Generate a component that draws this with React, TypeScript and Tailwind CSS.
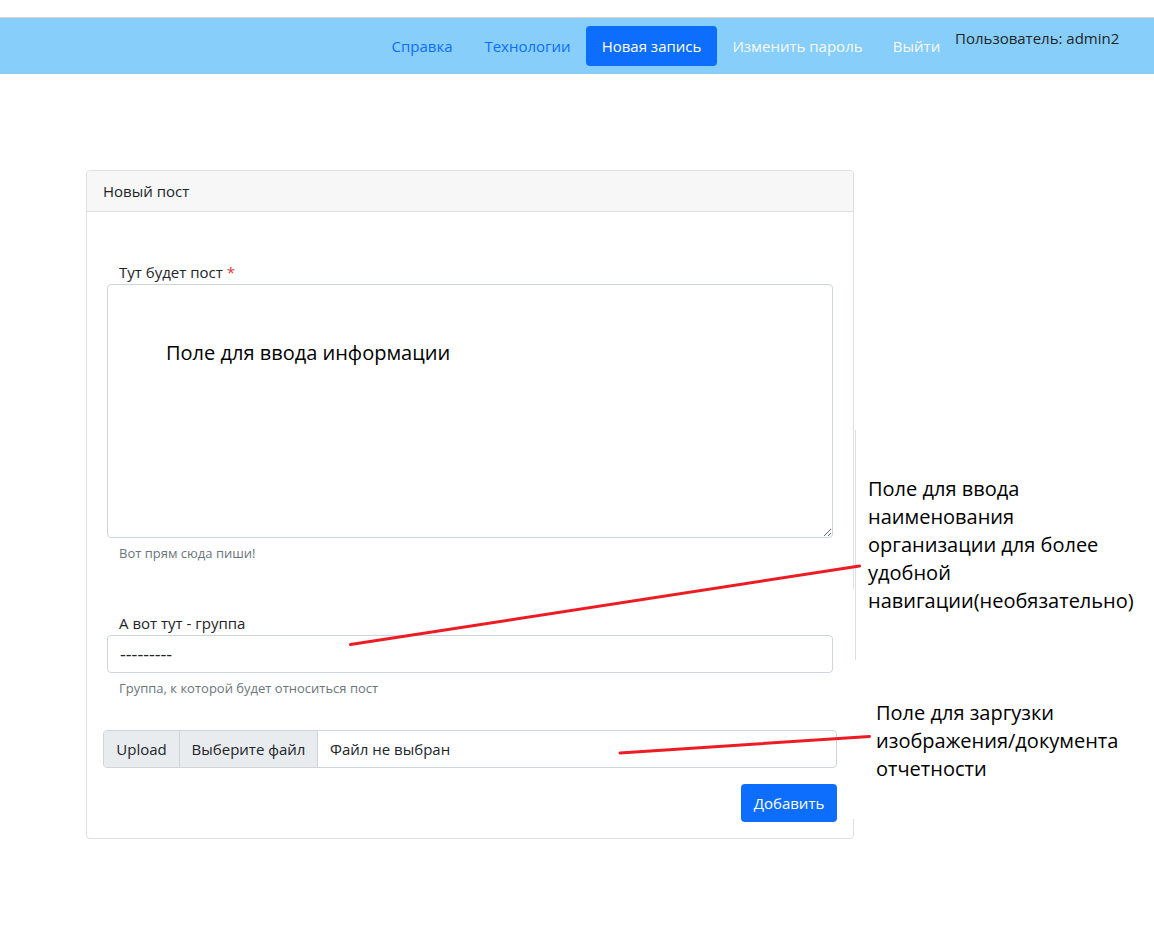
import { useState } from "react";

const navItems = [
  { label: "Справка", className: "w-[94px] text-[#0d6efd]" },
  { label: "Технологии", className: "w-[117px] text-[#0d6efd]" },
  { label: "Новая запись", className: "w-[131px] rounded bg-[#0d6efd] text-white" },
  { label: "Изменить пароль", className: "w-[161px] text-[#f8f9fa]" },
  { label: "Выйти", className: "w-[77px] text-[#f8f9fa]" },
];

function Header() {
  return (
    <header className="mt-[17px] flex justify-end border-t border-[#d3d3d3] bg-[#87cefa] py-2 pr-[36px]">
      <nav className="flex">
        {navItems.map((item) => (
          <a
            key={item.label}
            href="#"
            className={`flex h-10 items-center justify-center whitespace-nowrap ${item.className}`}
          >
            {item.label}
          </a>
        ))}
      </nav>
      <span className="w-[163px] whitespace-nowrap">Пользователь: admin2</span>
    </header>
  );
}

function PostForm() {
  const [fileName, setFileName] = useState("Файл не выбран");
  return (
    <form className="flex flex-col p-4" onSubmit={(e) => e.preventDefault()}>
      <div className="flex flex-col px-1 pt-8">
        <label htmlFor="post-text" className="px-3">
          Тут будет пост <span className="text-[#dc3545]">*</span>
        </label>
        <textarea
          id="post-text"
          required
          className="block h-[254px] w-full resize rounded border border-[#ced4da] bg-white px-3 py-2"
        />
        <small className="mt-1 px-3 text-[13px] leading-[22px] text-[#6c757d]">Вот прям сюда пиши!</small>
      </div>
      <div className="mt-[47px] flex flex-col px-1">
        <label htmlFor="post-group" className="px-3">
          А вот тут - группа
        </label>
        <select
          id="post-group"
          className="h-[38px] w-full appearance-none rounded border border-[#ced4da] bg-white px-3 text-[18px]"
        >
          <option>---------</option>
        </select>
        <small className="mt-1 px-3 text-[13px] leading-[22px] text-[#6c757d]">
          Группа, к которой будет относиться пост
        </small>
      </div>
      <label
        htmlFor="post-file"
        className="mt-[31px] flex h-[38px] overflow-hidden rounded border border-[#ced4da] bg-white"
      >
        <span className="flex w-[76px] items-center justify-center border-r border-[#ced4da] bg-[#e9ecef]">
          Upload
        </span>
        <span className="flex w-[138px] items-center justify-center border-r border-[#ced4da] bg-[#e9ecef]">
          Выберите файл
        </span>
        <span className="flex items-center px-3">{fileName}</span>
        <input
          id="post-file"
          type="file"
          className="sr-only"
          onChange={(e) => setFileName(e.target.files?.[0]?.name ?? "Файл не выбран")}
        />
      </label>
      <button type="submit" className="mt-4 h-[38px] w-24 self-end rounded bg-[#0d6efd] text-white">
        Добавить
      </button>
    </form>
  );
}

function Callouts() {
  return (
    <>
      <p className="pointer-events-none absolute top-[168px] left-[79px] text-[20px] leading-[28px] text-black">
        Поле для ввода информации
      </p>
      <span className="absolute top-[418px] -right-px h-[230px] w-px bg-white" />
      <span className="absolute top-[259px] -right-[3px] h-[230px] w-px bg-[#dfdfdf]" />
      <svg
        className="pointer-events-none absolute top-[379px] -right-[21px]"
        width="534"
        height="220"
        viewBox="340 550 534 220"
        fill="none"
        stroke="#ed1c24"
        strokeWidth="3"
        strokeLinecap="round"
        aria-hidden="true"
      >
        <path d="M350.5 644.5 L859.5 566" />
        <path d="M620 753 L869.5 736.5" />
      </svg>
    </>
  );
}

export default function App() {
  return (
    <div className="min-h-screen bg-white font-['Open_Sans','Noto_Sans',sans-serif] text-[15px] leading-6 text-[#212529]">
      <Header />
      <main className="flex items-start pt-24 pl-[86px]">
        <section className="relative min-w-0 flex-1 rounded border border-[#dfdfdf]">
          <h1 className="rounded-t border-b border-[#dfdfdf] bg-[#f7f7f7] px-4 py-2">Новый пост</h1>
          <PostForm />
          <Callouts />
        </section>
        <aside className="w-[300px] shrink-0 pt-[305px] pl-[14px] text-[20px] leading-[28px] text-black">
          <p>
            Поле для ввода
            <br />
            наименования
            <br />
            организации для более
            <br />
            удобной
            <br />
            навигации(необязательно)
          </p>
          <p className="mt-[84px] pl-2">
            Поле для заргузки
            <br />
            изображения/документа
            <br />
            отчетности
          </p>
        </aside>
      </main>
    </div>
  );
}
